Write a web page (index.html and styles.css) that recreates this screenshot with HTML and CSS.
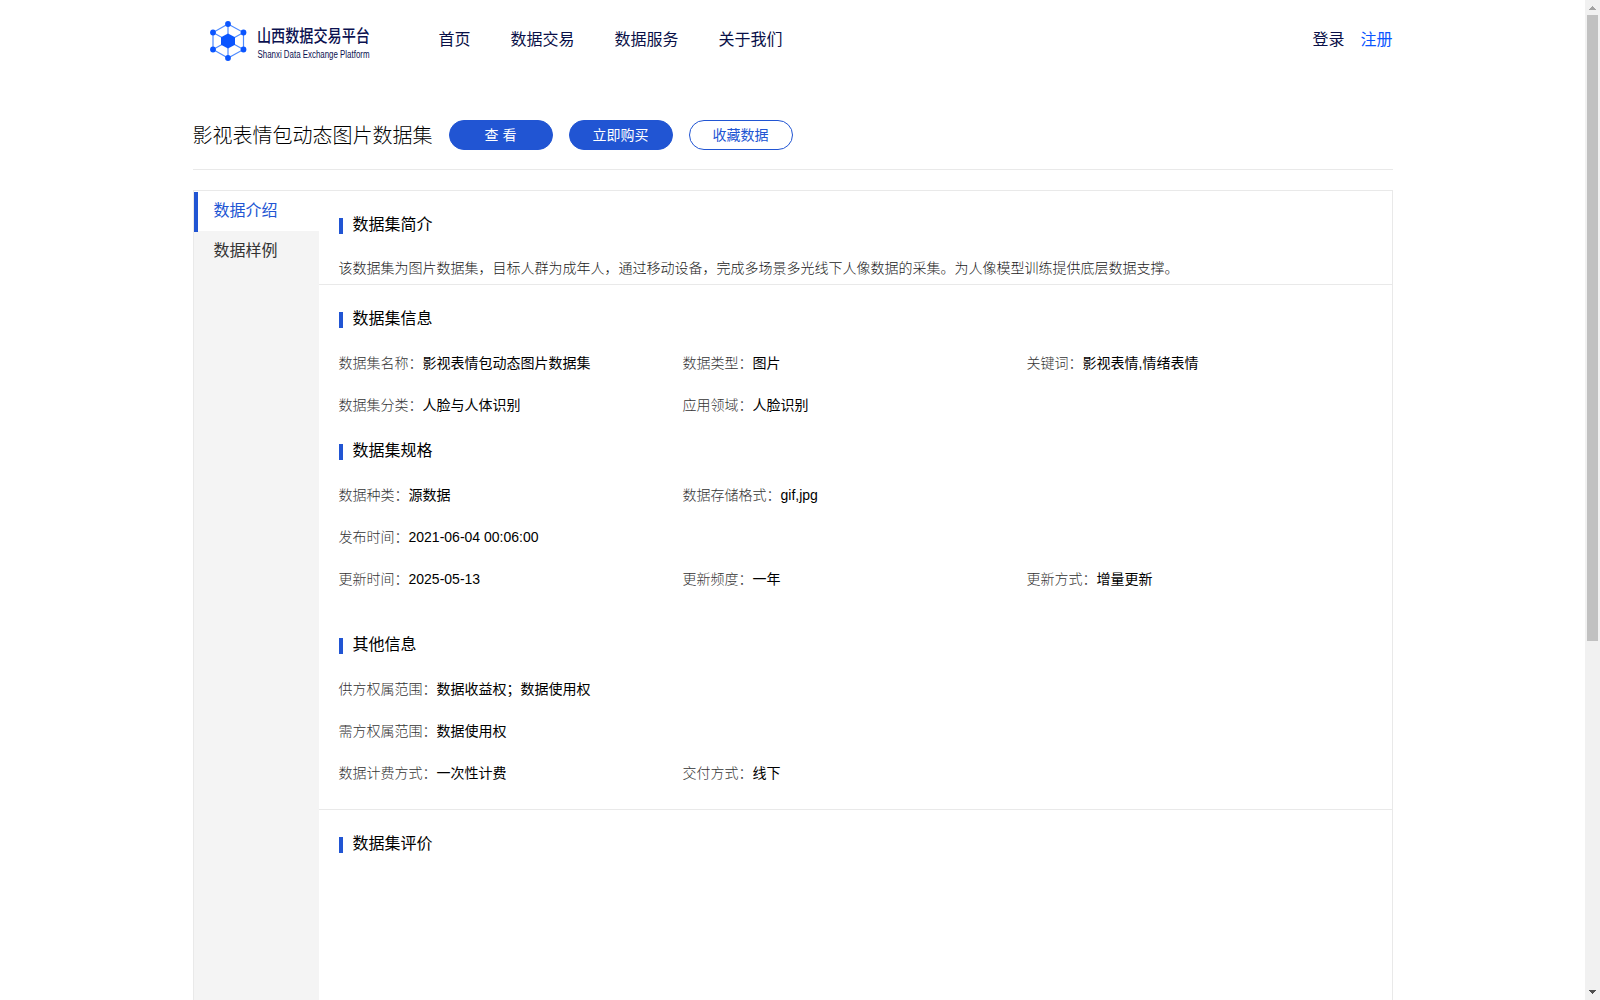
FILE: index.html
```html
<!DOCTYPE html>
<html lang="zh-CN">
<head>
    <meta charset="UTF-8">
    <meta name="viewport" content="width=device-width, initial-scale=1.0">
    <title>山西数据交易平台</title>
    <link rel="stylesheet" href="styles.css">
</head>
<body>
    <div class="page">
        <div class="header">
            <svg class="logo" width="200" height="50" viewBox="0 0 200 50">
                <g stroke="#4f8bff" stroke-width="1.2" fill="none">
                    <path d="M20 8L35.500 16.500V33.500L20 42L5 33.500V16.500Z"/>
                    <path d="M20 8V42M5 16.500L35.500 33.500M35.500 16.500L5 33.500"/>
                </g>
                <g fill="#0a55ff">
                    <path d="M20 17.500L27 21.300V28.700L20 32.500L13 28.700V21.300Z"/>
                    <circle cx="20" cy="8" r="2.900"/>
                    <circle cx="35.500" cy="16.500" r="2.900"/>
                    <circle cx="35.500" cy="33.500" r="2.900"/>
                    <circle cx="20" cy="42" r="2.900"/>
                    <circle cx="5" cy="33.500" r="2.900"/>
                    <circle cx="5" cy="16.500" r="2.900"/>
                </g>
                <text class="logo-cn" x="49" y="26" textLength="113" lengthAdjust="spacingAndGlyphs">山西数据交易平台</text>
                <text class="logo-en" x="49.500" y="41.500" textLength="112" lengthAdjust="spacingAndGlyphs">Shanxi Data Exchange Platform</text>
            </svg>
            <div class="nav">
                <a>首页</a>
                <a>数据交易</a>
                <a>数据服务</a>
                <a>关于我们</a>
            </div>
            <div class="user">
                <a>登录</a>
                <a class="register">注册</a>
            </div>
        </div>

        <div class="title-bar">
            <h1>影视表情包动态图片数据集</h1>
            <button class="btn">查 看</button>
            <button class="btn">立即购买</button>
            <button class="btn plain">收藏数据</button>
        </div>

        <div class="main">
            <div class="tabs">
                <div class="tab active">数据介绍</div>
                <div class="tab">数据样例</div>
            </div>
            <div class="content">
                <div class="section intro">
                    <h2>数据集简介</h2>
                    <p>该数据集为图片数据集，目标人群为成年人，通过移动设备，完成多场景多光线下人像数据的采集。为人像模型训练提供底层数据支撑。</p>
                </div>
                <div class="section detail">
                    <h2>数据集信息</h2>
                    <div class="row">
                        <div><label>数据集名称：</label>影视表情包动态图片数据集</div>
                        <div><label>数据类型：</label>图片</div>
                        <div><label>关键词：</label>影视表情,情绪表情</div>
                    </div>
                    <div class="row">
                        <div><label>数据集分类：</label>人脸与人体识别</div>
                        <div><label>应用领域：</label>人脸识别</div>
                    </div>
                    <h2 class="spec">数据集规格</h2>
                    <div class="row">
                        <div><label>数据种类：</label>源数据</div>
                        <div><label>数据存储格式：</label>gif,jpg</div>
                    </div>
                    <div class="row">
                        <div><label>发布时间：</label>2021-06-04 00:06:00</div>
                    </div>
                    <div class="row">
                        <div><label>更新时间：</label>2025-05-13</div>
                        <div><label>更新频度：</label>一年</div>
                        <div><label>更新方式：</label>增量更新</div>
                    </div>
                    <h2 class="other">其他信息</h2>
                    <div class="row">
                        <div><label>供方权属范围：</label>数据收益权；数据使用权</div>
                    </div>
                    <div class="row">
                        <div><label>需方权属范围：</label>数据使用权</div>
                    </div>
                    <div class="row">
                        <div><label>数据计费方式：</label>一次性计费</div>
                        <div><label>交付方式：</label>线下</div>
                    </div>
                </div>
                <div class="section">
                    <h2>数据集评价</h2>
                </div>
            </div>
        </div>
    </div>

    <div class="scrollbar">
        <svg width="15" height="15"><path d="M7 6h1v1h1v1h1v1h1v1H4V9h1V8h1V7h1z" fill="#a3a3a3"/></svg>
        <div class="thumb"></div>
        <svg class="down" width="15" height="15"><path d="M4 5h7v1h-1v1H9v1H8v1H7V8H6V7H5V6H4z" fill="#505050"/></svg>
    </div>
</body>
</html>
```

FILE: styles.css
```css
* {
    box-sizing: border-box;
}
body {
    margin: 0;
    height: 1000px;
    display: flex;
    overflow: hidden;
    background: #fff;
    color: #000;
    font-family: "Liberation Sans", "Noto Sans CJK SC", sans-serif;
    font-size: 14px;
}
.page {
    width: 1200px;
    margin: 0 auto;
    display: flex;
    flex-direction: column;
}
.header {
    display: flex;
    height: 78px;
    font-size: 16px;
    line-height: 80px;
    color: #0a1048;
}
.logo {
    margin: 16px 31px 0 15px;
}
.logo-cn {
    font-size: 17px;
    font-weight: 500;
    fill: #0b1150;
}
.logo-en {
    font-size: 10px;
    fill: #0b1150;
}
.nav {
    display: flex;
    gap: 40px;
}
.user {
    display: flex;
    gap: 16px;
    margin-left: auto;
}
.register {
    color: #0a55ff;
}
.title-bar {
    display: flex;
    align-items: center;
    gap: 16px;
    height: 70px;
    margin-top: 22px;
    border-bottom: 1px solid #e9e9e9;
}
h1 {
    margin: 0;
    padding-top: 3px;
    font-size: 20px;
    font-weight: 300;
    line-height: 30px;
    color: #000;
}
.btn {
    width: 104px;
    height: 30px;
    padding: 0;
    border: 1px solid #2155d3;
    border-radius: 15px;
    background: #2155d3;
    color: #fff;
    font: inherit;
    line-height: 28px;
}
.btn.plain {
    background: #fff;
    color: #2155d3;
}
.main {
    display: flex;
    flex: 1;
    margin-top: 20px;
    border: 1px solid #e9e9e9;
    border-bottom: none;
}
.tabs {
    width: 125px;
    padding-top: 1px;
    background: linear-gradient(#fff 40px, #f4f4f4 40px);
}
.tab {
    height: 40px;
    padding-left: 20px;
    font-size: 16px;
    line-height: 37px;
    color: #333;
}
.tab.active {
    padding-left: 16px;
    border-left: 4px solid #2155d3;
    color: #2155d3;
}
.content {
    flex: 1;
}
.section {
    padding: 20px 20px 0;
}
.intro {
    height: 94px;
    border-bottom: 1px solid #e9e9e9;
}
.detail {
    height: 525px;
    border-bottom: 1px solid #e9e9e9;
}
h2 {
    display: flex;
    align-items: center;
    gap: 10px;
    height: 28px;
    margin: 0;
    font-size: 16px;
    font-weight: 400;
    line-height: 28px;
}
h2::before {
    content: "";
    width: 4px;
    height: 16px;
    margin-top: 1px;
    background: #2155d3;
}
p {
    margin: 19px 0 0;
    line-height: 20px;
    font-weight: 300;
    color: #222;
}
.row {
    display: grid;
    grid-template-columns: repeat(3, 344px);
    height: 42px;
    line-height: 41px;
}
h2 + .row {
    margin-top: 10px;
}
.row label {
    color: #333;
    font-weight: 300;
}
.spec {
    margin-top: 10px;
}
.other {
    margin-top: 30px;
}
/* page scrollbar */
.scrollbar {
    display: flex;
    flex-direction: column;
    align-items: center;
    width: 15px;
    background: #f1f1f1;
}
.thumb {
    width: 11px;
    height: 626px;
    background: #c1c1c1;
}
.down {
    margin-top: auto;
}
```
